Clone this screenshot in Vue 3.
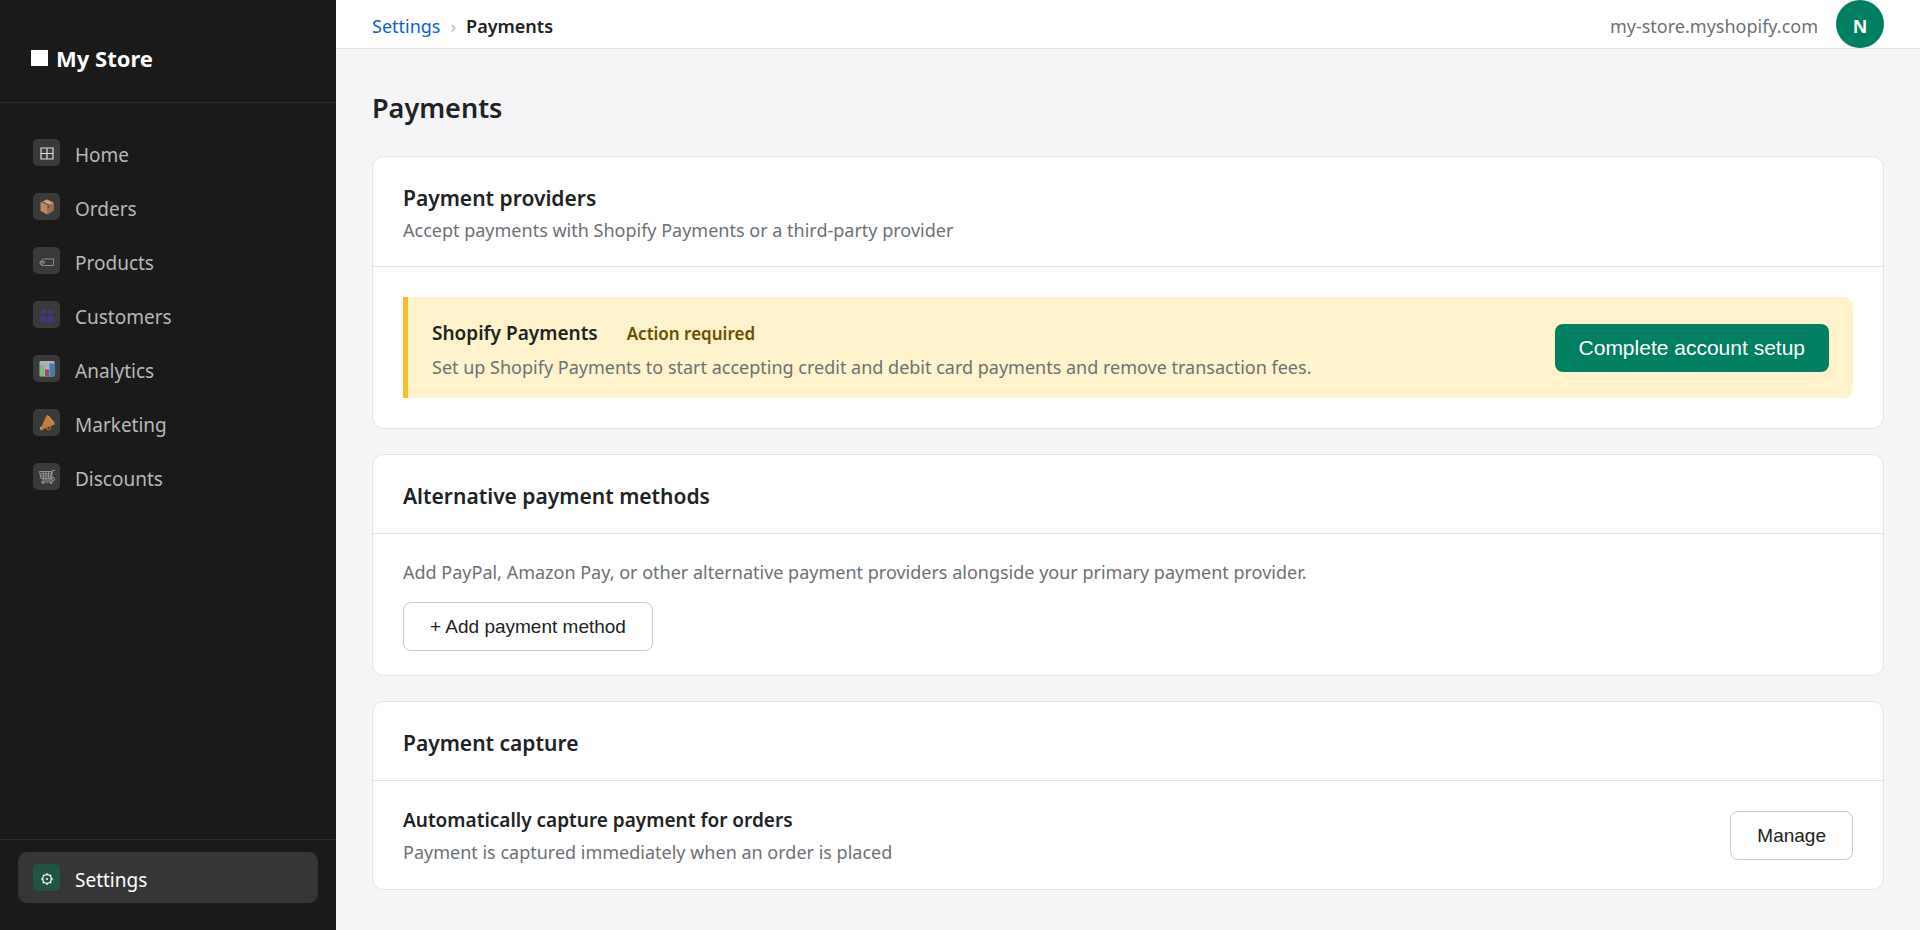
<template>
  <div class="layout">
    <aside class="sidebar">
      <div class="logo"><span class="logo-mark"></span>My Store</div>
      <nav class="nav">
        <a
          v-for="item in menu"
          :key="item.id"
          href="#"
          class="nav-item"
          :class="{ active: active === item.id }"
          @click.prevent="active = item.id"
        >
          <span class="nav-icon">
            <svg v-if="item.id === 'home'" viewBox="0 0 18 18">
              <path d="M3 4h12v11H3zM9 4v11M3 9.5h12" fill="none" stroke="#dcdcdc" stroke-width="1.2" />
            </svg>
            <svg v-else-if="item.id === 'orders'" viewBox="0 0 18 18">
              <path d="M9 1.5l6.5 3.2v8L9 16.5l-6.5-3.8v-8z" fill="#b98763" />
              <path d="M9 7.8l6.5-3.1v8L9 16.5z" fill="#9c6e50" />
              <path d="M2.5 4.7L9 1.5l6.5 3.2L9 7.8z" fill="#cb9c78" />
              <path d="M5 3.5l6.3 3.2v3l-1.8.9v-3L3.3 4.3z" fill="#6f5646" />
              <path d="M3.5 10.5l2 1v2l-2-1z" fill="#c98a86" />
            </svg>
            <svg v-else-if="item.id === 'products'" viewBox="0 0 18 18">
              <path d="M5.5 7h10v6.5h-10L3 11.5V9z" fill="none" stroke="#8c8c8c" />
              <circle cx="5.5" cy="10.3" r="1" fill="none" stroke="#b0b0b0" stroke-width=".8" />
              <path d="M5 10C1 7 1 14 5 13.5" fill="none" stroke="#8c8c8c" />
            </svg>
            <svg v-else-if="item.id === 'customers'" viewBox="0 0 18 18">
              <g fill="#4a3479">
                <circle cx="5.5" cy="6.2" r="2.5" />
                <circle cx="12.5" cy="6.2" r="2.5" />
                <path d="M2 16v-2.5Q2 9.5 5.5 9.5T9 13.5V16zM9.5 16v-2.5q0-4 3.2-4t3.3 4V16z" />
              </g>
            </svg>
            <svg v-else-if="item.id === 'analytics'" viewBox="0 0 18 18">
              <rect x="1.5" y="1" width="15" height="15.5" rx="1" fill="#b1afbd" />
              <rect x="2" y="5" width="4.5" height="11" fill="#82b878" />
              <rect x="7" y="9.5" width="4" height="6.5" fill="#aa3f68" />
              <rect x="11.5" y="3.5" width="4.5" height="12.5" fill="#3c7fae" />
            </svg>
            <svg v-else-if="item.id === 'marketing'" viewBox="0 0 18 18">
              <path d="M8.5 14q1 2.5 3 1.3t.5-3.3" fill="none" stroke="#9d6940" stroke-width="1.3" />
              <path d="M8.5 1.5l8 9L5 15.3l-1.8-2.1z" fill="#c47c3d" />
              <path d="M8.5 1.5q1-.8 2.3.5l5.2 6q1.3 2 .5 2.5z" fill="#dfa065" />
              <path d="M3.2 12l2 3.5-2.4.8-1.3-2.2z" fill="#bd9064" />
            </svg>
            <svg v-else viewBox="0 0 18 18">
              <path
                d="M1.5 3.5H13.500l-.8 7H3zM2 5.800h11.500M2.500 8.100H13M5 3.500l.5 7M7.700 3.500l.3 7M10.500 3.500v7"
                fill="none"
                stroke="#999"
                stroke-width=".9"
              />
              <path d="M17 2.200l-2.500.5-1.300 9.300H4M3 14h12" fill="none" stroke="#999" />
              <circle cx="15" cy="11" r="1.5" fill="none" stroke="#999" />
              <circle cx="5" cy="15" r="1" fill="#999" />
              <circle cx="13" cy="15" r="1" fill="#999" />
            </svg>
          </span>
          <span class="label">{{ item.title }}</span>
        </a>
      </nav>
      <div class="sidebar-footer">
        <a
          href="#"
          class="nav-item"
          :class="{ active: active === 'settings' }"
          @click.prevent="active = 'settings'"
        >
          <span class="nav-icon">
            <svg viewBox="0 0 18 18">
              <circle cx="9" cy="10" r="4.3" fill="none" stroke="#fff" stroke-width="1.3" />
              <circle cx="9" cy="10" r="1" fill="#fff" />
              <path
                d="M9 4.2v1.5M9 14.3v1.5M3.2 10h1.5M13.3 10h1.5M4.9 5.9l1 1M12.1 13.1l1 1M4.9 14.1l1-1M12.1 6.9l1-1"
                stroke="#fff"
                stroke-width="1.5"
              />
            </svg>
          </span>
          <span class="label">Settings</span>
        </a>
      </div>
    </aside>

    <div class="main">
      <header class="topbar">
        <div class="breadcrumb label">
          <a href="#">Settings</a>
          <span class="sep">›</span>
          <span class="current">Payments</span>
        </div>
        <div class="account">
          <span class="label">my-store.myshopify.com</span>
          <button class="avatar">N</button>
        </div>
      </header>

      <main class="content">
        <h1>Payments</h1>

        <section class="card">
          <div class="card-header">
            <h2>Payment providers</h2>
            <p>Accept payments with Shopify Payments or a third-party provider</p>
          </div>
          <div class="card-body providers">
            <div class="banner">
              <div class="banner-text">
                <h3>Shopify Payments <span class="badge">Action required</span></h3>
                <p>
                  Set up Shopify Payments to start accepting credit and debit card payments and
                  remove transaction fees.
                </p>
              </div>
              <button class="btn btn-primary">Complete account setup</button>
            </div>
          </div>
        </section>

        <section class="card">
          <div class="card-header">
            <h2>Alternative payment methods</h2>
          </div>
          <div class="card-body methods">
            <p>
              Add PayPal, Amazon Pay, or other alternative payment providers alongside your primary
              payment provider.
            </p>
            <button class="btn">+ Add payment method</button>
          </div>
        </section>

        <section class="card">
          <div class="card-header">
            <h2>Payment capture</h2>
          </div>
          <div class="card-body capture">
            <div>
              <h3>Automatically capture payment for orders</h3>
              <p>Payment is captured immediately when an order is placed</p>
            </div>
            <button class="btn">Manage</button>
          </div>
        </section>
      </main>
    </div>
  </div>
</template>

<script setup>
import { ref } from "vue";

const active = ref("settings");

const menu = [
  { id: "home", title: "Home" },
  { id: "orders", title: "Orders" },
  { id: "products", title: "Products" },
  { id: "customers", title: "Customers" },
  { id: "analytics", title: "Analytics" },
  { id: "marketing", title: "Marketing" },
  { id: "discounts", title: "Discounts" },
];
</script>

<style>
body {
  margin: 0;
  background: #f5f5f7;
}
</style>

<style scoped>
* {
  box-sizing: border-box;
}

.layout {
  display: flex;
  min-height: 100vh;
  font-family: "Noto Sans", "Open Sans", sans-serif;
  font-size: 18px;
  line-height: 26px;
  color: #202223;
}

h1,
h2,
h3,
p {
  margin: 0;
  font-weight: 600;
}

a {
  text-decoration: none;
}

/* sidebar */
.sidebar {
  display: flex;
  flex-direction: column;
  flex: 0 0 336px;
  background: #1a1a1a;
}

.logo {
  display: flex;
  align-items: center;
  gap: 8px;
  padding: 44px 31px 30px;
  border-bottom: 1px solid #2c2c2c;
  font-size: 22px;
  line-height: 28px;
  font-weight: 700;
  color: #fff;
}

.logo-mark {
  width: 17px;
  height: 16px;
  background: #fff;
}

.nav {
  display: flex;
  flex-direction: column;
  flex: 1;
  gap: 3px;
  padding: 24px 18px;
}

.nav-item {
  display: flex;
  align-items: center;
  gap: 15px;
  height: 51px;
  padding: 0 15px;
  border-radius: 9px;
  font-size: 19px;
  color: #b8b8b8;
}

.nav-item.active {
  background: #363636;
  color: #fff;
}

.nav-icon {
  display: flex;
  align-items: center;
  justify-content: center;
  width: 27px;
  height: 27px;
  border-radius: 5px;
  background: #3a3a3a;
}

.nav-icon svg {
  width: 18px;
  height: 18px;
}

.nav-item.active .nav-icon {
  background: #205546;
}

.label {
  padding-top: 4px;
}

.sidebar-footer {
  padding: 12px 18px 27px;
  border-top: 1px solid #2c2c2c;
}

/* top bar */
.main {
  flex: 1;
  min-width: 0;
}

.topbar {
  display: flex;
  align-items: center;
  justify-content: space-between;
  padding: 0 36px;
  border-bottom: 1px solid #e1e3e5;
  background: #fff;
}

.breadcrumb {
  display: flex;
  gap: 10px;
}

.breadcrumb a {
  color: #0b63ce;
}

.sep {
  color: #b9bdc1;
}

.current {
  font-weight: 600;
}

.account {
  display: flex;
  align-items: center;
  gap: 18px;
  color: #6d7175;
}

.avatar {
  width: 48px;
  height: 48px;
  padding: 4px 0 0;
  border: 0;
  border-radius: 50%;
  background: #008060;
  color: #fff;
  font-family: inherit;
  font-size: 18px;
  font-weight: 700;
}

/* content */
.content {
  display: flex;
  flex-direction: column;
  gap: 25px;
  padding: 39px 36px;
}

h1 {
  padding-bottom: 3px;
  font-size: 27px;
  line-height: 40px;
}

h2 {
  font-size: 21px;
  line-height: 28px;
}

h3 {
  font-size: 19px;
  line-height: 28px;
}

p {
  font-weight: 400;
  color: #6d7175;
}

.card {
  border: 1px solid #e1e3e5;
  border-radius: 12px;
  background: #fff;
}

.card-header {
  display: flex;
  flex-direction: column;
  gap: 5px;
  padding: 27px 30px 23px;
  border-bottom: 1px solid #e1e3e5;
}

.card-body {
  padding: 25px 30px 24px;
}

.card-body.providers {
  padding: 30px;
}

.banner {
  display: flex;
  align-items: center;
  justify-content: space-between;
  gap: 24px;
  padding: 16px 24px;
  border-left: 5px solid #f9bf29;
  border-radius: 0 9px 9px 0;
  background: #fff2cc;
}

.banner-text {
  display: flex;
  flex-direction: column;
  gap: 6px;
  padding: 6px 0 2px;
}

.badge {
  margin-left: 24px;
  font-size: 17px;
  color: #6b4f00;
}

.methods {
  display: flex;
  flex-direction: column;
  align-items: flex-start;
  gap: 17px;
}

.capture {
  display: flex;
  align-items: center;
  justify-content: space-between;
}

.capture h3 {
  margin-bottom: 5px;
}

.btn {
  flex-shrink: 0;
  height: 49px;
  padding: 0 26px;
  border: 1px solid #c9cccf;
  border-radius: 8px;
  background: #fff;
  color: #202223;
  font-family: "Liberation Sans", Arial, sans-serif;
  font-size: 19px;
  cursor: pointer;
}

.btn-primary {
  height: 48px;
  padding: 0 24px;
  border: 0;
  background: #008060;
  color: #fff;
  font-size: 21px;
}
</style>
